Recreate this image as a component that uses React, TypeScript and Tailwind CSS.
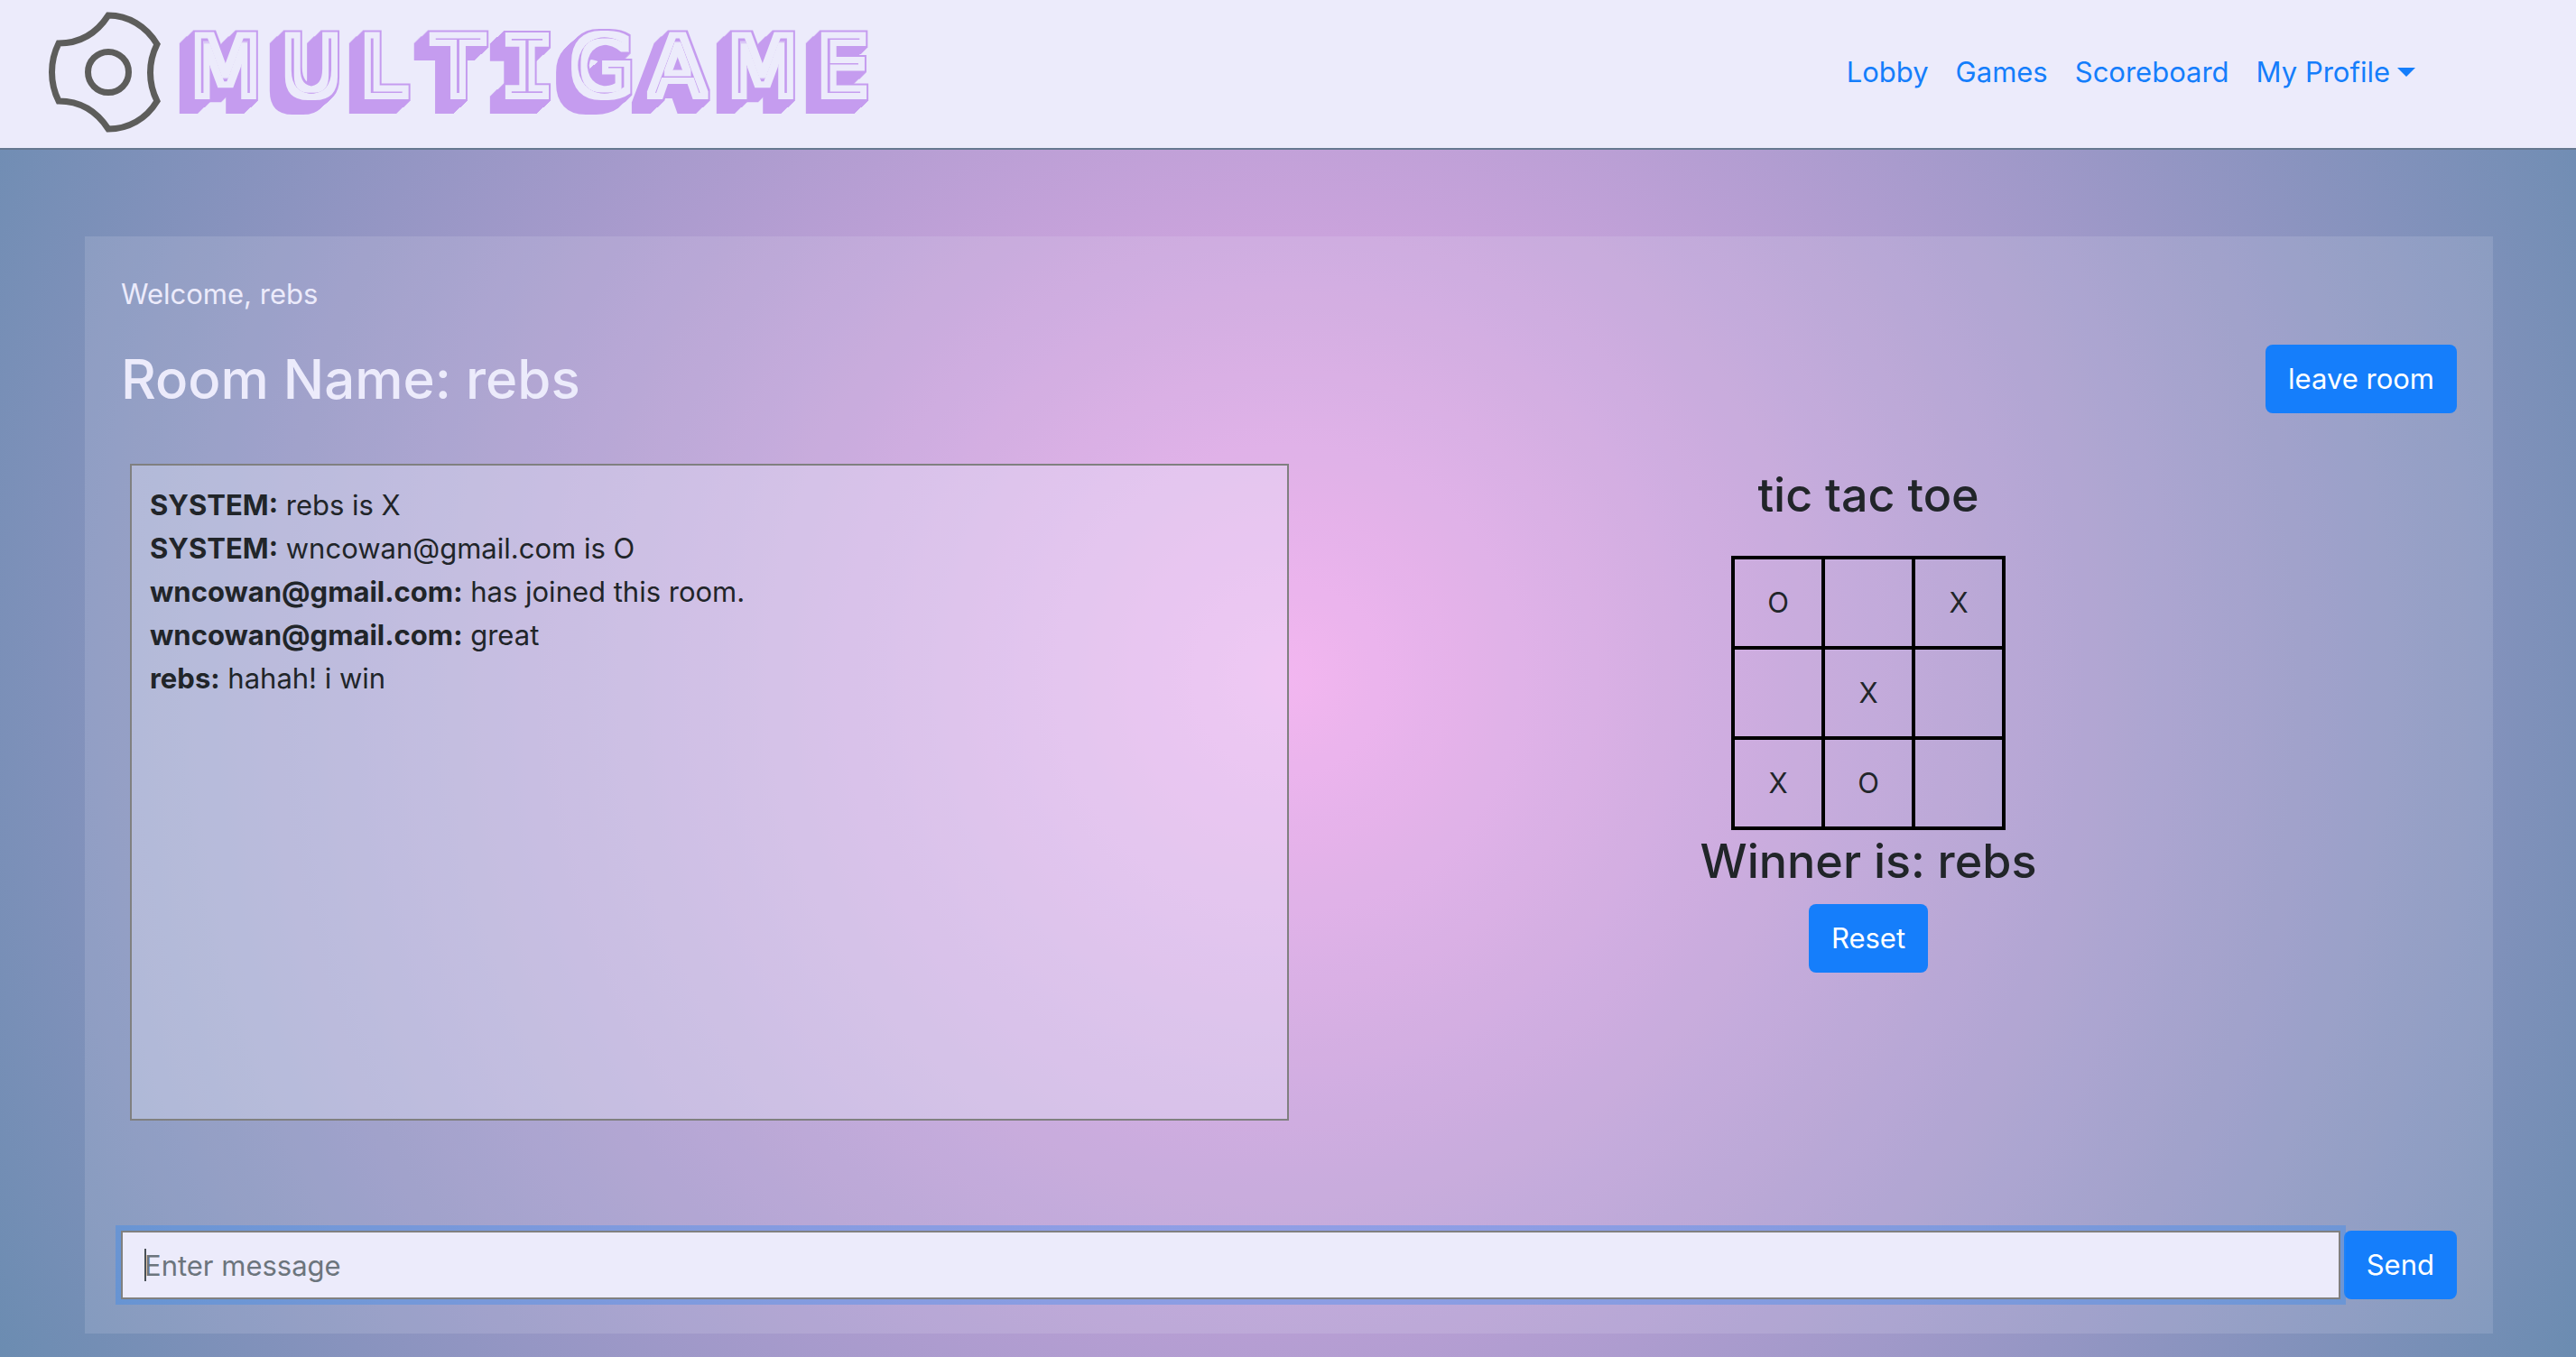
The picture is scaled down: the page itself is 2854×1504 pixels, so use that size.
import React from "react";

function Logo() {
  return (
    <svg width="980" height="164" viewBox="0 0 980 164" className="block" role="img" aria-label="Multigame">
      <defs>
        <filter id="extrude" filterUnits="userSpaceOnUse" x="170" y="10" width="810" height="140" colorInterpolationFilters="sRGB">
          <feFlood floodColor="#c59cef" result="ink" />
          <feFlood floodColor="#ecebfb" result="paper" />
          <feMorphology in="SourceAlpha" operator="dilate" radius="6" result="outer" />
          <feMorphology in="SourceAlpha" operator="dilate" radius="4" result="inner" />
          <feMorphology in="SourceAlpha" operator="erode" radius="3" result="core" />
          <feOffset in="outer" dx="-1" dy="0.9" result="o1" />
          <feMerge result="s1">
            <feMergeNode in="outer" />
            <feMergeNode in="o1" />
          </feMerge>
          <feOffset in="s1" dx="-2" dy="1.8" result="o2" />
          <feMerge result="s2">
            <feMergeNode in="s1" />
            <feMergeNode in="o2" />
          </feMerge>
          <feOffset in="s2" dx="-4" dy="3.6" result="o4" />
          <feMerge result="s4">
            <feMergeNode in="s2" />
            <feMergeNode in="o4" />
          </feMerge>
          <feOffset in="s4" dx="-8" dy="7.2" result="o8" />
          <feMerge result="s8">
            <feMergeNode in="s4" />
            <feMergeNode in="o8" />
          </feMerge>
          <feComposite in="ink" in2="s8" operator="in" result="body" />
          <feComposite in="paper" in2="inner" operator="in" result="face" />
          <feComposite in="ink" in2="core" operator="in" result="line" />
          <feMerge>
            <feMergeNode in="body" />
            <feMergeNode in="face" />
            <feMergeNode in="line" />
          </feMerge>
        </filter>
      </defs>
      <g fill="none" stroke="#5d5d5b" strokeWidth="7">
        <path d="M120 17C142 17 162 29 174 49C164 69 164 92 174 112C162 132 142 143 120 143C107 123 88 112 65 112C55 92 55 68 65 48C88 48 107 37 120 17Z" />
        <circle cx="120" cy="80" r="22.5" />
      </g>
      <text
        x="211 312 399 480 554 632 720 806 905"
        y="106"
        fontFamily='"DejaVu Sans", sans-serif'
        fontSize="90"
        filter="url(#extrude)"
      >
        MULT
        <tspan fontFamily='"Liberation Mono", monospace' fontSize="100">I</tspan>
        GAME
      </text>
    </svg>
  );
}

const messages = [
  { from: "SYSTEM:", text: "rebs is X" },
  { from: "SYSTEM:", text: "wncowan@gmail.com is O" },
  { from: "wncowan@gmail.com:", text: "has joined this room." },
  { from: "wncowan@gmail.com:", text: "great" },
  { from: "rebs:", text: "hahah! i win" },
];

const board = [
  ["O", "", "X"],
  ["", "X", ""],
  ["X", "O", ""],
];

function Button({ children, type = "button" }: { children: React.ReactNode; type?: "button" | "submit" }) {
  return (
    <button type={type} className="h-[76px] shrink-0 rounded-lg bg-[#157efb] px-[25px] text-[31px] text-white">
      {children}
    </button>
  );
}

export default function App() {
  return (
    <div className="flex min-h-screen flex-col bg-[radial-gradient(circle,#f4adef_0%,#6b8cb1_100%)] font-['Inter',sans-serif] text-[31px] leading-[48px] text-[#212529]">
      <header className="flex h-[166px] items-center justify-between border-b-2 border-[#667890] bg-[#ecebfb] pr-[178px]">
        <a href="#home">
          <Logo />
        </a>
        <nav className="flex items-center gap-[30px] pb-1 text-[#157efb]">
          <a href="#lobby">Lobby</a>
          <a href="#games">Games</a>
          <a href="#scoreboard">Scoreboard</a>
          <button type="button" className="flex items-center gap-2">
            My Profile
            <svg width="20" height="10" viewBox="0 0 20 10" aria-hidden="true">
              <path d="M0 0H20L10 10Z" fill="currentColor" />
            </svg>
          </button>
        </nav>
      </header>

      <main className="mt-24 mr-[92px] mb-[26px] ml-[94px] flex grow flex-col bg-[#ecebfb]/15 px-10 pt-10 pb-[38px]">
        <p className="text-[#ecebfb]">Welcome, rebs</p>
        <div className="mt-8 flex items-center justify-between">
          <h1 className="text-[60px] leading-[76px] font-medium text-[#ecebfb]">Room Name: rebs</h1>
          <Button>leave room</Button>
        </div>

        <div className="mt-14 grid grid-cols-2 px-[10px]">
          <section aria-label="Messages" className="h-[728px] border-2 border-[#808080] bg-[#ecebfb]/35 px-5 py-5">
            {messages.map((m) => (
              <p key={m.from + m.text}>
                <b>{m.from}</b> {m.text}
              </p>
            ))}
          </section>
          <section className="flex flex-col items-center">
            <h2 className="text-[52px] leading-[70px] font-medium">tic tac toe</h2>
            <table className="mt-8 border-collapse">
              <tbody>
                {board.map((row, r) => (
                  <tr key={r}>
                    {row.map((cell, c) => (
                      <td key={c} className="h-[100px] w-[100px] border-4 border-black p-0 text-center">
                        {cell}
                      </td>
                    ))}
                  </tr>
                ))}
              </tbody>
            </table>
            <h2 className="mb-3 text-[52px] leading-[70px] font-medium">Winner is: rebs</h2>
            <Button>Reset</Button>
          </section>
        </div>

        <form className="mt-auto flex gap-1" onSubmit={(e) => e.preventDefault()}>
          <div className="relative flex min-w-0 grow items-center">
            <input
              type="text"
              aria-label="Message"
              placeholder="Enter message"
              className="h-[76px] w-full border-2 border-[#808080] bg-[#ecebfb] px-6 text-[#495057] placeholder-[#6c757d] caret-transparent ring-6 ring-[#2a86f7]/35 outline-none"
            />
            <span aria-hidden="true" className="absolute left-[26px] h-9 w-0.5 bg-[#495057]" />
          </div>
          <Button type="submit">Send</Button>
        </form>
      </main>
    </div>
  );
}
